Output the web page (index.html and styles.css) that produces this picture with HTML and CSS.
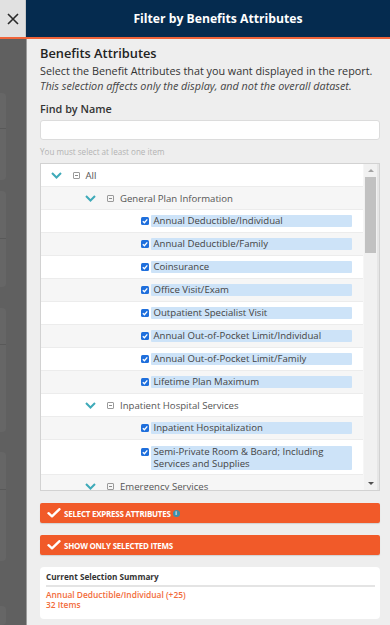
FILE: index.html
```html
<!DOCTYPE html>
<html>
<head>
<meta charset="utf-8">
<link rel="stylesheet" href="styles.css">
</head>
<body>
<div class="app">
  <header class="topbar">
    <button class="close" aria-label="Close">
      <svg width="12" height="12" viewBox="0 0 12 12"><path d="M1 1 L11 11 M11 1 L1 11" stroke="#2b2b2b" stroke-width="1.6" fill="none"/></svg>
    </button>
    <h1 class="title">Filter by Benefits Attributes</h1>
  </header>
  <div class="main">
    <div class="backdrop">
      <div class="ghost g1"><span class="gdiv d1"></span></div>
      <div class="ghost g2"><span class="gdiv d2"></span></div>
      <div class="ghost g3"><span class="gdiv d3"></span></div>
      <div class="ghost g4"><span class="gdiv d4"></span></div>
      <div class="ghost g5"></div>
    </div>
    <div class="panel">
      <h2 class="heading">Benefits Attributes</h2>
      <p class="desc">Select the Benefit Attributes that you want displayed in the report.<br><em>This selection affects only the display, and not the overall dataset.</em></p>
      <label class="find-label">Find by Name</label>
      <input class="find-input" type="text">
      <p class="hint">You must select at least one item</p>

      <div class="tree">
        <div class="tree-list">
          <div class="row lv0">
            <svg class="chev" viewBox="0 0 11 7"><path d="M1 1 L5.5 5.5 L10 1" stroke="#3eaab9" stroke-width="2" fill="none"/></svg>
            <span class="minusbox"></span><span class="node">All</span>
          </div>
          <div class="row lv1 alt">
            <svg class="chev" viewBox="0 0 11 7"><path d="M1 1 L5.5 5.5 L10 1" stroke="#3eaab9" stroke-width="2" fill="none"/></svg>
            <span class="minusbox"></span><span class="node">General Plan Information</span>
          </div>
          <div class="row lv2"><span class="cb"><svg viewBox="0 0 8 8"><path d="M1.8 4.2 L3.4 5.7 L6.3 2.3" stroke="#fff" stroke-width="1.3" fill="none"/></svg></span><span class="lbl">Annual Deductible/Individual</span></div>
          <div class="row lv2 alt"><span class="cb"><svg viewBox="0 0 8 8"><path d="M1.8 4.2 L3.4 5.7 L6.3 2.3" stroke="#fff" stroke-width="1.3" fill="none"/></svg></span><span class="lbl">Annual Deductible/Family</span></div>
          <div class="row lv2"><span class="cb"><svg viewBox="0 0 8 8"><path d="M1.8 4.2 L3.4 5.7 L6.3 2.3" stroke="#fff" stroke-width="1.3" fill="none"/></svg></span><span class="lbl">Coinsurance</span></div>
          <div class="row lv2 alt"><span class="cb"><svg viewBox="0 0 8 8"><path d="M1.8 4.2 L3.4 5.7 L6.3 2.3" stroke="#fff" stroke-width="1.3" fill="none"/></svg></span><span class="lbl">Office Visit/Exam</span></div>
          <div class="row lv2"><span class="cb"><svg viewBox="0 0 8 8"><path d="M1.8 4.2 L3.4 5.7 L6.3 2.3" stroke="#fff" stroke-width="1.3" fill="none"/></svg></span><span class="lbl">Outpatient Specialist Visit</span></div>
          <div class="row lv2 alt"><span class="cb"><svg viewBox="0 0 8 8"><path d="M1.8 4.2 L3.4 5.7 L6.3 2.3" stroke="#fff" stroke-width="1.3" fill="none"/></svg></span><span class="lbl">Annual Out-of-Pocket Limit/Individual</span></div>
          <div class="row lv2"><span class="cb"><svg viewBox="0 0 8 8"><path d="M1.8 4.2 L3.4 5.7 L6.3 2.3" stroke="#fff" stroke-width="1.3" fill="none"/></svg></span><span class="lbl">Annual Out-of-Pocket Limit/Family</span></div>
          <div class="row lv2 alt"><span class="cb"><svg viewBox="0 0 8 8"><path d="M1.8 4.2 L3.4 5.7 L6.3 2.3" stroke="#fff" stroke-width="1.3" fill="none"/></svg></span><span class="lbl">Lifetime Plan Maximum</span></div>
          <div class="row lv1">
            <svg class="chev" viewBox="0 0 11 7"><path d="M1 1 L5.5 5.5 L10 1" stroke="#3eaab9" stroke-width="2" fill="none"/></svg>
            <span class="minusbox"></span><span class="node">Inpatient Hospital Services</span>
          </div>
          <div class="row lv2 alt"><span class="cb"><svg viewBox="0 0 8 8"><path d="M1.8 4.2 L3.4 5.7 L6.3 2.3" stroke="#fff" stroke-width="1.3" fill="none"/></svg></span><span class="lbl">Inpatient Hospitalization</span></div>
          <div class="row lv2 tall"><span class="cb"><svg viewBox="0 0 8 8"><path d="M1.8 4.2 L3.4 5.7 L6.3 2.3" stroke="#fff" stroke-width="1.3" fill="none"/></svg></span><span class="lbl">Semi-Private Room &amp; Board; Including Services and Supplies</span></div>
          <div class="row lv1 alt">
            <svg class="chev" viewBox="0 0 11 7"><path d="M1 1 L5.5 5.5 L10 1" stroke="#3eaab9" stroke-width="2" fill="none"/></svg>
            <span class="minusbox"></span><span class="node">Emergency Services</span>
          </div>
        </div>
        <div class="scrollbar">
          <span class="arrow up"></span>
          <span class="thumb"></span>
          <span class="spacer"></span>
          <span class="arrow down"></span>
        </div>
      </div>

      <button class="action">
        <svg class="tick" viewBox="0 0 14 10"><path d="M1.5 5.2 L5 8.3 L12.5 1.2" stroke="#fff" stroke-width="2.4" fill="none" stroke-linecap="round" stroke-linejoin="round"/></svg>
        <span>SELECT EXPRESS ATTRIBUTES</span>
        <span class="info">i</span>
      </button>
      <button class="action second">
        <svg class="tick" viewBox="0 0 14 10"><path d="M1.5 5.2 L5 8.3 L12.5 1.2" stroke="#fff" stroke-width="2.4" fill="none" stroke-linecap="round" stroke-linejoin="round"/></svg>
        <span>SHOW ONLY SELECTED ITEMS</span>
      </button>

      <section class="summary">
        <h3 class="sum-title">Current Selection Summary</h3>
        <p class="sum-text">Annual Deductible/Individual (+25)<br>32 Items</p>
      </section>
    </div>
  </div>
</div>
</body>
</html>
```
FILE: styles.css
```css
* { box-sizing: border-box; }
html, body { margin: 0; padding: 0; }
body {
  width: 390px;
  height: 625px;
  overflow: hidden;
  font-family: "Open Sans", "Noto Sans", sans-serif;
  background: #eeeeee;
}
.app { display: flex; flex-direction: column; height: 625px; }

.topbar {
  display: flex;
  height: 39px;
  border-bottom: 2px solid #f0643a;
  flex: 0 0 auto;
}
.close {
  width: 26px;
  border: 0;
  padding: 0;
  background: #e1e1e1;
  display: flex;
  align-items: center;
  justify-content: center;
  border-right: 1px solid #c8c8c8;
}
.title {
  flex: 1;
  margin: 0;
  background: #052b4f;
  color: #fff;
  font-size: 12.2px;
  font-weight: 700;
  display: flex;
  align-items: center;
  justify-content: center;
  padding-left: 20px;
}

.main { display: flex; flex: 1; min-height: 0; }

.backdrop {
  width: 27px;
  background: #606060;
  border-right: 1px solid #9c9c9c;
  display: flex;
  flex-direction: column;
  padding-top: 54px;
}
.ghost {
  width: 6px;
  background: #666666;
  border-radius: 0 4px 4px 0;
}
.g1 { height: 89px; }
.g2 { height: 99px; margin-top: 11px; }
.g3 { height: 127px; margin-top: 21px; }
.g4 { height: 112px; margin-top: 20px; }
.g5 { height: 20px; margin-top: 45px; }
.gdiv { display: block; height: 1px; background: #595959; }
.d1 { margin-top: 35px; }
.d2 { margin-top: 47px; }
.d3 { margin-top: 36px; }
.d4 { margin-top: 37px; }

.panel {
  flex: 1;
  background: #eeeeee;
  padding: 6px 10px 0 13px;
  display: flex;
  flex-direction: column;
}
.heading {
  margin: 0;
  font-size: 12.8px;
  line-height: 16px;
  font-weight: 600;
  color: #222;
}
.desc {
  margin: 3px 0 0;
  font-size: 10.8px;
  line-height: 14.7px;
  color: #333;
  white-space: nowrap;
}
.desc em { color: #444; }
.find-label {
  margin-top: 8.1px;
  font-size: 10.8px;
  line-height: 14px;
  font-weight: 600;
  color: #333;
}
.find-input {
  margin-top: 4.5px;
  height: 19.5px;
  width: 100%;
  border: 1px solid #dcdcdc;
  border-radius: 3px;
  background: #fff;
}
.hint {
  margin: 7.5px 0 0;
  font-size: 8.1px;
  line-height: 10px;
  color: #b3b3b3;
}

.tree {
  margin-top: 6.4px;
  height: 328px;
  border: 1px solid #d2d2d2;
  background: #fff;
  display: flex;
  overflow: hidden;
}
.tree-list { flex: 1; min-width: 0; }
.row {
  display: flex;
  align-items: center;
  height: 23px;
  border-bottom: 1px solid #ececec;
  background: #fff;
  font-size: 9.6px;
  color: #555;
}
.row.alt { background: #f6f6f6; }
.lv0 { padding-left: 10px; }
.lv1 { padding-left: 44px; }
.lv2 { padding-left: 99.5px; }
.chev { width: 11px; height: 7px; flex: 0 0 auto; }
.minusbox {
  width: 7px;
  height: 7px;
  margin-left: 11px;
  border: 1px solid #9a9a9a;
  border-radius: 1px;
  position: relative;
  flex: 0 0 auto;
}
.minusbox::after {
  content: "";
  position: absolute;
  left: 1px;
  right: 1px;
  top: 2px;
  height: 1px;
  background: #8a8a8a;
}
.node { margin-left: 6px; color: #555; }
.lv0 .node { margin-left: 5.5px; }
.cb {
  width: 8px;
  height: 8px;
  border-radius: 1.5px;
  background: #1f6fdc;
  flex: 0 0 auto;
  display: flex;
}
.cb svg { width: 8px; height: 8px; }
.lbl {
  margin-left: 2px;
  width: 201px;
  background: #cde3f8;
  line-height: 12px;
  padding-left: 3px;
  color: #444;
  border-radius: 1px;
}
.row.tall {
  height: 35px;
  align-items: flex-start;
  padding-top: 6px;
}
.row.tall .cb { margin-top: 1.5px; }
.row.tall .lbl { line-height: 11.7px; }

.scrollbar {
  width: 16px;
  background: #f1f1f1;
  border-left: 1px solid #f6f6f6;
  border-right: 2px solid #e6e6e6;
  display: flex;
  flex-direction: column;
  align-items: center;
}
.arrow { width: 0; height: 0; border-left: 3px solid transparent; border-right: 3px solid transparent; }
.arrow.up { border-bottom: 3px solid #a3a3a3; margin-top: 5px; }
.arrow.down { border-top: 3px solid #505050; margin-bottom: 5px; }
.thumb {
  width: 11px;
  height: 76px;
  margin-top: 5px;
  background: #c1c1c1;
}
.spacer { flex: 1; }

.action {
  margin-top: 12px;
  height: 20px;
  width: 100%;
  border: 0;
  border-radius: 2px;
  background: #f15a29;
  color: #fff;
  font-family: "Open Sans", sans-serif;
  font-size: 8px;
  font-weight: 700;
  letter-spacing: -0.25px;
  display: flex;
  align-items: center;
  padding: 0 0 0 7px;
  box-shadow: 0 1px 1px rgba(0,0,0,0.12);
}
.action.second { margin-top: 12px; height: 19.5px; }
.tick { width: 14px; height: 10px; margin-right: 3px; flex: 0 0 auto; }
.info {
  width: 7px;
  height: 7px;
  border-radius: 50%;
  background: #3f8fa8;
  color: #fff;
  font-size: 5px;
  line-height: 7px;
  text-align: center;
  margin-left: 2px;
  letter-spacing: 0;
}

.summary {
  margin-top: 12.5px;
  background: #fff;
  border-radius: 4px;
  padding: 4px 5px 6px 6px;
  height: 51.5px;
}
.sum-title {
  margin: 0;
  font-size: 8.2px;
  line-height: 12px;
  font-weight: 700;
  color: #333;
  padding-bottom: 2px;
  border-bottom: 2px solid #e4e4e4;
}
.sum-text {
  margin: 3px 0 0;
  font-size: 8.4px;
  line-height: 10px;
  font-weight: 600;
  color: #f26b3a;
}
```
